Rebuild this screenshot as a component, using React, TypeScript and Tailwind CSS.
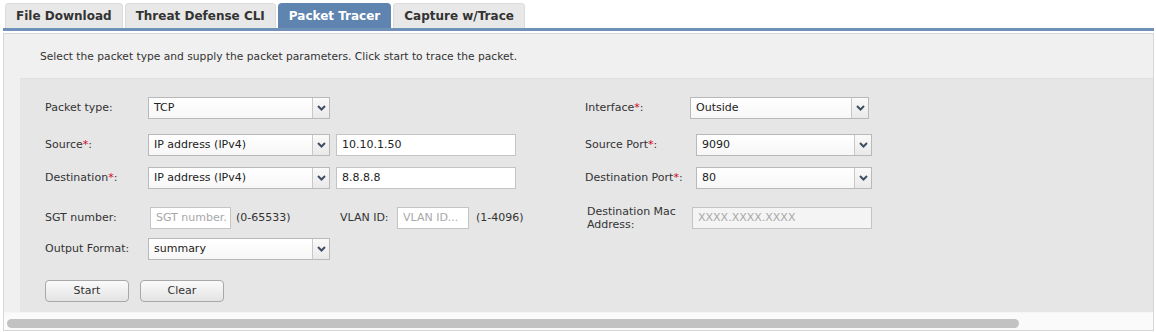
import React from 'react';

const font = { fontFamily: '"DejaVu Sans", Verdana, sans-serif' };

function Chevron() {
  return (
    <svg width="9" height="6" viewBox="0 0 9 6" className="text-[#3f4d63]">
      <path d="M1 1 L4.5 4.5 L8 1" fill="none" stroke="currentColor" strokeWidth="2" />
    </svg>
  );
}

function Select({ value, w }: { value: string; w: string }) {
  return (
    <div className={`flex h-[22px] ${w} border border-[#b9b9b9] bg-gradient-to-b from-white to-[#f7f7f7]`}>
      <div className="flex flex-1 items-center pl-[5px] text-[11px] text-[#222]">{value}</div>
      <div className="flex w-[17px] items-center justify-center border-l border-[#c8c8c8] bg-gradient-to-b from-[#fafafa] to-[#e9e9e9]">
        <Chevron />
      </div>
    </div>
  );
}

function TextBox({ value, w, placeholder, disabled }: { value?: string; w: string; placeholder?: string; disabled?: boolean }) {
  return (
    <div
      className={`flex h-[22px] ${w} items-center border border-[#c4c4c4] pl-[5px] text-[11px] ${
        disabled ? 'bg-[#f4f4f4] text-[#b0b0b0]' : 'bg-white text-[#222]'
      }`}
    >
      {value ?? <span className="text-[#a8a8a8]">{placeholder}</span>}
    </div>
  );
}

function Label({ text, req, w }: { text: string; req?: boolean; w: string }) {
  return (
    <div className={`${w} text-[11px] text-[#333]`}>
      {text}
      {req && <span className="text-[#d0021b]">*</span>}:
    </div>
  );
}

function Tab({ label, active }: { label: string; active?: boolean }) {
  return (
    <div
      className={`flex h-[25px] items-center rounded-t-[4px] px-[10px] text-[12px] font-bold ${
        active ? 'bg-[#5f84b0] px-[11px] text-white' : 'border-t border-x border-[#dcdcdc] bg-[#e8e8e8] text-[#333]'
      }`}
    >
      {label}
    </div>
  );
}

export default function App() {
  return (
    <div className="h-[332px] w-[1156px] bg-white" style={font}>
      <div className="flex gap-[2px] pl-[5px] pt-[3px]">
        <Tab label="File Download" />
        <Tab label="Threat Defense CLI" />
        <Tab label="Packet Tracer" active />
        <Tab label="Capture w/Trace" />
      </div>
      <div className="ml-[3px] mr-[2px] h-[3px] bg-[#6f90b7]" />
      <div className="ml-[3px] mr-[2px] mt-[2px] border border-[#d6d6d6] bg-[#f0f0f0]">
        <div className="h-[44px] pl-[36px] pt-[15px] text-[10.7px] text-[#333]">
          Select the packet type and supply the packet parameters. Click start to trace the packet.
        </div>
        <div className="ml-[16px] border-t border-[#e0e0e0] bg-[#e6e6e6] pb-[10px] pl-[25px] pt-[18px]">
          <div className="flex items-center">
            <div className="flex w-[540px] items-center">
              <Label text="Packet type" w="w-[103px]" />
              <Select value="TCP" w="w-[182px]" />
            </div>
            <div className="flex items-center">
              <Label text="Interface" req w="w-[105px]" />
              <Select value="Outside" w="w-[179px]" />
            </div>
          </div>
          <div className="mt-[15px] flex items-center">
            <div className="flex w-[540px] items-center gap-[6px]">
              <Label text="Source" req w="w-[97px]" />
              <Select value="IP address (IPv4)" w="w-[182px]" />
              <TextBox value="10.10.1.50" w="w-[180px]" />
            </div>
            <div className="flex items-center">
              <Label text="Source Port" req w="w-[111px]" />
              <Select value="9090" w="w-[176px]" />
            </div>
          </div>
          <div className="mt-[11px] flex items-center">
            <div className="flex w-[540px] items-center gap-[6px]">
              <Label text="Destination" req w="w-[97px]" />
              <Select value="IP address (IPv4)" w="w-[182px]" />
              <TextBox value="8.8.8.8" w="w-[180px]" />
            </div>
            <div className="flex items-center">
              <Label text="Destination Port" req w="w-[111px]" />
              <Select value="80" w="w-[176px]" />
            </div>
          </div>
          <div className="mt-[16px] flex items-center">
            <div className="flex w-[542px] items-center text-[11px] text-[#333]">
              <Label text="SGT number" w="w-[105px]" />
              <TextBox placeholder="SGT number." w="w-[81px]" />
              <span className="ml-[5px] w-[104px]">(0-65533)</span>
              <span className="w-[57px]">VLAN ID:</span>
              <TextBox placeholder="VLAN ID..." w="w-[72px]" />
              <span className="ml-[7px]">(1-4096)</span>
            </div>
            <div className="flex items-center">
              <div className="w-[105px] text-[11px] leading-[13px] text-[#333]">
                Destination Mac
                <br />
                Address:
              </div>
              <TextBox placeholder="XXXX.XXXX.XXXX" w="w-[180px]" disabled />
            </div>
          </div>
          <div className="mt-[7px] flex items-center">
            <Label text="Output Format" w="w-[103px]" />
            <Select value="summary" w="w-[182px]" />
          </div>
          <div className="mt-[20px] flex gap-[11px]">
            <button className="h-[22px] w-[84px] rounded-[4px] border border-[#a8a8a8] bg-gradient-to-b from-[#fbfbfb] to-[#e3e3e3] text-[11px] text-[#333]">
              Start
            </button>
            <button className="h-[22px] w-[84px] rounded-[4px] border border-[#a8a8a8] bg-gradient-to-b from-[#fbfbfb] to-[#e3e3e3] text-[11px] text-[#333]">
              Clear
            </button>
          </div>
        </div>
        <div className="h-[18px] border-t border-[#f6f6f6] bg-[#fafafa] px-[3px] pt-[6px]">
          <div className="h-[9px] w-[1012px] rounded-full bg-[#c2c2c2]" />
        </div>
      </div>
    </div>
  );
}
